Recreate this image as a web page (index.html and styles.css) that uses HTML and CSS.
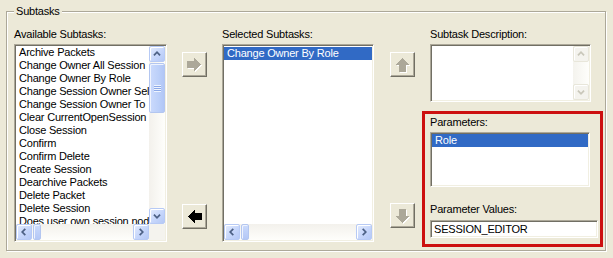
FILE: index.html
```html
<!DOCTYPE html>
<html>
<head>
<meta charset="utf-8">
<link rel="stylesheet" href="styles.css">
</head>
<body>
<fieldset class="group">
  <legend class="legend">Subtasks</legend>
  <div class="cols">
    <div class="col col-avail">
      <div class="lbl">Available Subtasks:</div>
      <div class="listbox avail">
        <div class="items">
          <div class="item">Archive Packets</div>
          <div class="item">Change Owner All Session</div>
          <div class="item">Change Owner By Role</div>
          <div class="item">Change Session Owner Select</div>
          <div class="item">Change Session Owner To</div>
          <div class="item">Clear CurrentOpenSession pointer</div>
          <div class="item">Close Session</div>
          <div class="item">Confirm</div>
          <div class="item">Confirm Delete</div>
          <div class="item">Create Session</div>
          <div class="item">Dearchive Packets</div>
          <div class="item">Delete Packet</div>
          <div class="item">Delete Session</div>
          <div class="item">Does user own session node</div>
        </div>
        <div class="vbar">
          <div class="sbtn"><svg viewBox="0 0 16 16"><path d="M4.5 9.5 8 6l3.5 3.5"/></svg></div>
          <div class="vthumb"><div class="vgrip"></div></div>
          <div class="vtrack"></div>
          <div class="sbtn"><svg viewBox="0 0 16 16"><path d="M4.5 6.5 8 10l3.5-3.5"/></svg></div>
        </div>
        <div class="hbar">
          <div class="sbtn"><svg viewBox="0 0 16 16"><path d="M9.5 4.5 6 8l3.5 3.5"/></svg></div>
          <div class="hthumb"></div>
          <div class="htrack"></div>
          <div class="sbtn"><svg viewBox="0 0 16 16"><path d="M6.5 4.5 10 8l-3.5 3.5"/></svg></div>
        </div>
        <div class="corner"></div>
      </div>
    </div>

    <div class="btncol btncol-mid">
      <button class="arrbtn" type="button">
        <svg class="arr dis" width="15" height="13" viewBox="0 0 15 13"><path class="sh" d="M1 4H8V1L15 7.5 8 14V11H1Z"/><path d="M0 3H7V0L14 6.5 7 13V10H0Z"/></svg>
      </button>
      <button class="arrbtn" type="button">
        <svg class="arr" width="15" height="13" viewBox="0 0 15 13"><path d="M15 3H8V0L1 6.5 8 13V10H15Z"/></svg>
      </button>
    </div>

    <div class="col col-sel">
      <div class="lbl">Selected Subtasks:</div>
      <div class="listbox sel">
        <div class="items">
          <div class="item on">Change Owner By Role</div>
        </div>
        <div class="hbar">
          <div class="sbtn"><svg viewBox="0 0 16 16"><path d="M9.5 4.5 6 8l3.5 3.5"/></svg></div>
          <div class="hthumb"></div>
          <div class="htrack"></div>
          <div class="sbtn"><svg viewBox="0 0 16 16"><path d="M6.5 4.5 10 8l-3.5 3.5"/></svg></div>
        </div>
      </div>
    </div>

    <div class="btncol btncol-right">
      <button class="arrbtn" type="button">
        <svg class="arr dis" width="15" height="14" viewBox="0 0 15 14"><path class="sh" d="M5 15V8H1L8.5 1 16 8H12V15Z"/><path d="M4 14V7H0L7.5 0 15 7H11V14Z"/></svg>
      </button>
      <button class="arrbtn" type="button">
        <svg class="arr dis" width="15" height="14" viewBox="0 0 15 14"><path class="sh" d="M5 1V8H1L8.5 15 16 8H12V1Z"/><path d="M4 0V7H0L7.5 14 15 7H11V0Z"/></svg>
      </button>
    </div>

    <div class="col col-desc">
      <div class="lbl inset">Subtask Description:</div>
      <div class="listbox desc">
        <div class="items"></div>
        <div class="vbar disabled">
          <div class="sbtn"><svg viewBox="0 0 16 16"><path d="M4.5 9.5 8 6l3.5 3.5"/></svg></div>
          <div class="vtrack"></div>
          <div class="sbtn"><svg viewBox="0 0 16 16"><path d="M4.5 6.5 8 10l3.5-3.5"/></svg></div>
        </div>
      </div>
      <div class="params">
        <div class="lbl">Parameters:</div>
        <div class="listbox plist">
          <div class="items">
            <div class="item on">Role</div>
          </div>
        </div>
        <div class="lbl pv">Parameter Values:</div>
        <div class="textbox">SESSION_EDITOR</div>
      </div>
    </div>
  </div>
</fieldset>
</body>
</html>
```

FILE: styles.css
```css
* { box-sizing: border-box; }

html, body {
  margin: 0;
  padding: 0;
  background: #ECE9D8;
}

body {
  width: 613px;
  height: 258px;
  overflow: hidden;
  padding-top: 5px;
  font-family: "Liberation Sans", Arial, sans-serif;
  font-size: 11px;
  letter-spacing: -0.2px;
  color: #000;
}

.group {
  width: 600px;
  margin: 0 0 0 6px;
  padding: 10px 2px 3px 7px;
  border: 1px solid #ACA899;
  box-shadow: inset 1px 1px 0 #fff, 1px 1px 0 #fff;
  min-width: 0;
}

.legend {
  padding: 0 2px;
  margin-left: 0;
  line-height: 13px;
  height: 13px;
  background: #ECE9D8;
}

.cols {
  display: flex;
  align-items: flex-start;
}

.col { display: flex; flex-direction: column; }

.lbl {
  height: 13px;
  line-height: 13px;
  margin-bottom: 3px;
  white-space: nowrap;
}

.lbl.inset { margin-left: 8px; }

/* sunken list boxes */
.listbox {
  position: relative;
  background: #fff;
  border: 1px solid;
  border-color: #ACA899 #fff #fff #ACA899;
  box-shadow: inset 1px 1px 0 #716F64, inset -1px -1px 0 #F1EFE2;
  padding: 1px;
  display: grid;
  overflow: hidden;
}

.items {
  overflow: hidden;
  white-space: nowrap;
}

.item {
  height: 13px;
  line-height: 13px;
  padding-left: 3px;
}

.item.on {
  background: #316AC5;
  color: #fff;
}

.avail {
  width: 153px;
  height: 198px;
  grid-template-columns: 1fr 16px;
  grid-template-rows: 1fr 16px;
}

.sel {
  width: 152px;
  height: 198px;
  grid-template-columns: 1fr;
  grid-template-rows: 1fr 16px;
}

.sel .item.on { margin-top: 1px; }

.desc {
  width: 161px;
  height: 58px;
  margin-left: 8px;
  grid-template-columns: 1fr 16px;
}

/* scrollbars */
.vbar {
  display: flex;
  flex-direction: column;
  background: linear-gradient(to right, #F3F1EC, #FEFEFB);
}

.hbar {
  display: flex;
  background: linear-gradient(to bottom, #F3F1EC, #FEFEFB);
}

.corner {
  background: #F4F3EE;
}

.sbtn {
  width: 16px;
  height: 16px;
  flex: none;
  border: 1px solid #B7CAF5;
  border-radius: 2px;
  background: linear-gradient(135deg, #E4ECFD 0%, #C6D6FB 55%, #B4C8F6 100%);
  box-shadow: inset 1px 1px 0 #fff;
}

.sbtn svg {
  display: block;
  width: 14px;
  height: 14px;
}

.sbtn svg path {
  fill: none;
  stroke: #4D6185;
  stroke-width: 2;
}

.vtrack, .htrack { flex: 1; }

.vthumb {
  height: 50px;
  margin-top: 1px;
  border: 1px solid #B3C6F0;
  border-radius: 2px;
  background: linear-gradient(to right, #CBDAFC, #BCD0F9 60%, #B1C6F6);
  box-shadow: inset 1px 1px 0 #EEF3FE;
  display: flex;
  align-items: center;
  justify-content: center;
}

.vgrip {
  width: 7px;
  height: 7px;
  background: repeating-linear-gradient(to bottom, #EEF4FE 0 1px, #8CA9E8 1px 2px);
}

.hthumb {
  width: 8px;
  margin-left: 1px;
  border: 1px solid #B3C6F0;
  border-radius: 2px;
  background: linear-gradient(to bottom, #CBDAFC, #B4C8F6);
  box-shadow: inset 1px 1px 0 #EEF3FE;
}

.vbar.disabled {
  background: linear-gradient(to right, #F4F3EE, #FEFEFB);
}

.vbar.disabled .sbtn {
  border-color: #E8E6DA;
  background: #F4F3EE;
  box-shadow: inset 1px 1px 0 #fff;
}

.vbar.disabled .sbtn svg path { stroke: #C9C7BA; }

/* command buttons */
.btncol {
  display: flex;
  flex-direction: column;
  justify-content: space-between;
  height: 198px;
  margin-top: 16px;
  padding: 8px 0 13px;
}

.btncol-mid { margin-left: 15px; }
.col-sel { margin-left: 15px; }
.btncol-right { margin-left: 16px; padding-bottom: 14px; }
.col-desc { margin-left: 7px; width: 181px; }

.arrbtn {
  width: 25px;
  height: 25px;
  padding: 0;
  margin: 0;
  border: 1px solid;
  border-color: #fff #716F64 #716F64 #fff;
  box-shadow: inset -1px -1px 0 #ACA899;
  background: #ECE9D8;
  display: flex;
  align-items: center;
  justify-content: center;
}

.arr { display: block; overflow: visible; shape-rendering: crispEdges; }
.arr path { fill: #000; }
.arr.dis path { fill: #ACA899; }
.arr.dis path.sh { fill: #fff; }

/* parameters panel */
.params {
  margin-top: 9px;
  height: 136px;
  border: 3px solid #CC1010;
  padding: 2px 0 0 5px;
}

.plist {
  width: 160px;
  height: 55px;
}

.lbl.pv { margin-top: 16px; margin-bottom: 4px; }

.textbox {
  width: 168px;
  height: 18px;
  background: #fff;
  border: 1px solid;
  border-color: #ACA899 #fff #fff #ACA899;
  box-shadow: inset 1px 1px 0 #716F64, inset -1px -1px 0 #F1EFE2;
  padding: 0 0 0 3px;
  line-height: 16px;
  white-space: nowrap;
}
```
